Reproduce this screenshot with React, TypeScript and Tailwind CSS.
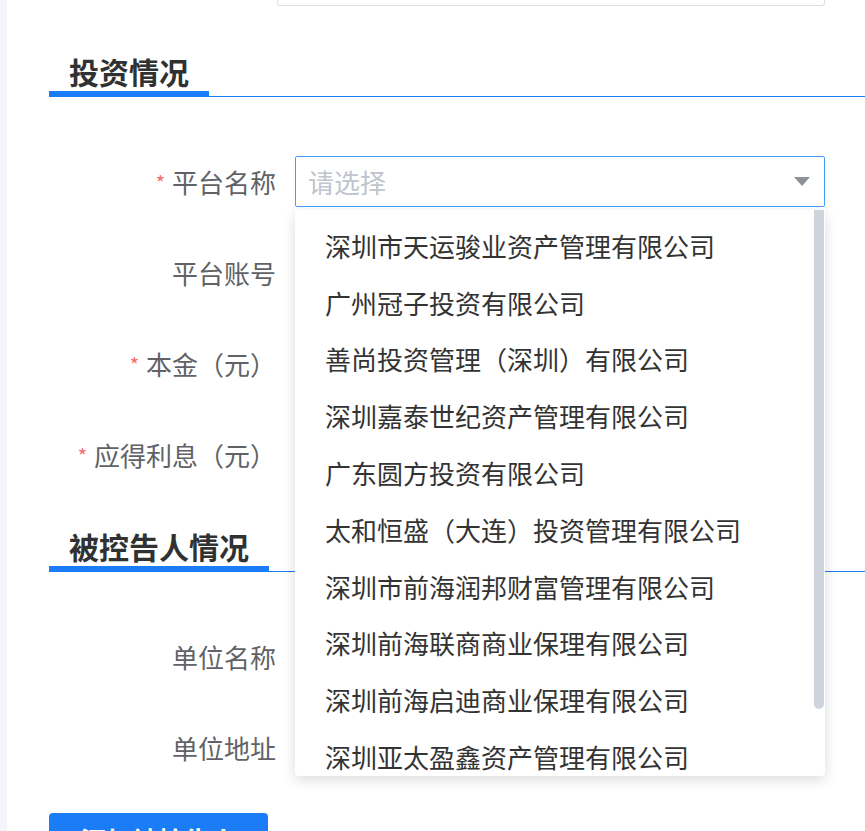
import React from 'react';

const companies = [
  '深圳市天运骏业资产管理有限公司',
  '广州冠子投资有限公司',
  '善尚投资管理（深圳）有限公司',
  '深圳嘉泰世纪资产管理有限公司',
  '广东圆方投资有限公司',
  '太和恒盛（大连）投资管理有限公司',
  '深圳市前海润邦财富管理有限公司',
  '深圳前海联商商业保理有限公司',
  '深圳前海启迪商业保理有限公司',
  '深圳亚太盈鑫资产管理有限公司',
  '深圳前海国泰财富管理有限公司',
];

function SectionTitle({ title }: { title: string }) {
  return (
    <div className="flex border-b border-[#1b7cf8] -mr-px">
      <div className="px-[20px] border-b-[6px] border-[#1b7cf8] -mb-px">
        <h3 className="text-[30px] leading-[39px] font-bold text-[#303133]">{title}</h3>
      </div>
    </div>
  );
}

function FormItem({ label, required, children }: { label: string; required?: boolean; children?: React.ReactNode }) {
  return (
    <div className="flex items-center h-[51px] mb-[40px]">
      <div className="w-[227px] pr-[19px] box-content flex justify-end items-center shrink-0 text-[26px] text-[#606266]">
        {required && <span className="text-[#f56c6c] text-[20px] mr-[7px] mt-[2px]">*</span>}
        <span className="w-max">{label}</span>
      </div>
      <div className="w-[530px] -ml-[19px] pl-[19px]">{children}</div>
    </div>
  );
}

export default function App() {
  return (
    <div
      className="flex min-h-screen bg-white overflow-hidden"
      style={{ fontFamily: '"Noto Sans CJK SC", "Noto Sans", sans-serif' }}
    >
      <div className="w-[7px] shrink-0 bg-[#f3f5fa]" />
      <div className="flex-1 pl-[42px] flex flex-col">
        {/* tail of the previous field */}
        <div className="ml-[228px] mr-[40px] h-[6px] border border-t-0 border-[#dcdfe6] rounded-b-[3px]" />

        <div className="mt-[46px]">
          <SectionTitle title="投资情况" />
        </div>

        <div className="mt-[59px] relative">
          <FormItem label="平台名称" required>
            <div className="relative">
              <div className="h-[51px] w-[530px] border border-[#409eff] rounded-[2px] flex items-center justify-between pl-[12px] pr-[14px] bg-white">
                <span className="text-[26px] text-[#c0c4cc]">请选择</span>
                <svg width="16" height="9" viewBox="0 0 16 9">
                  <path d="M0 0 L16 0 L8 9 Z" fill="#8e919a" />
                </svg>
              </div>
              {/* dropdown */}
              <div className="absolute left-0 top-[54px] w-[530px] h-[566px] bg-white rounded-b-[4px] shadow-[0_4px_14px_rgba(0,0,0,0.14)] overflow-hidden z-10">
                <ul className="pt-[7px]">
                  {companies.map((c) => (
                    <li key={c} className="h-[56.8px] flex items-center pl-[30px] text-[26px] text-[#333333] whitespace-nowrap">
                      {c}
                    </li>
                  ))}
                </ul>
                <div className="absolute right-[1px] top-0 w-[10px] h-[499px] rounded-b-full bg-[#cfd4dc]" />
              </div>
            </div>
          </FormItem>
          <FormItem label="平台账号" />
          <FormItem label="本金（元）" required />
          <FormItem label="应得利息（元）" required />
        </div>

        <div className="mt-[7px]">
          <SectionTitle title="被控告人情况" />
        </div>

        <div className="mt-[59px]">
          <FormItem label="单位名称" />
          <FormItem label="单位地址" />
        </div>

        <button className="w-[219px] h-[52px] bg-[#1b7cf8] rounded-[4px] text-white text-[26px] font-bold">
          添加被控告人
        </button>
      </div>
    </div>
  );
}
